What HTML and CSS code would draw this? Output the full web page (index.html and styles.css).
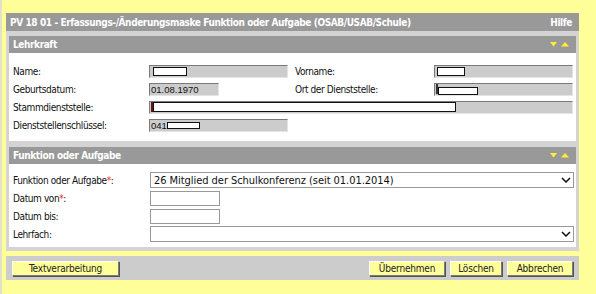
FILE: index.html
```html
<!DOCTYPE html>
<html lang="de">
<head>
<meta charset="utf-8">
<title>PV 18 01</title>
<link rel="stylesheet" href="styles.css">
</head>
<body>
<div class="page">
  <div class="panel">
    <div class="titlebar">
      <span>PV 18 01 - Erfassungs-/Änderungsmaske Funktion oder Aufgabe (OSAB/USAB/Schule)</span>
      <span>Hilfe</span>
    </div>
    <div class="frame">
      <section class="sec">
        <div class="sec-head">
          <span>Lehrkraft</span>
          <svg class="toggles" width="20" height="5" viewBox="0 0 20 5"><polygon points="0,0 7,0 3.5,4.5" /><polygon points="11,4.5 19,4.5 15,0" /></svg>
        </div>
        <div class="sec-body grid-a">
          <div class="lbl">Name:</div>
          <div class="ro w139"><span class="redact r-name"></span></div>
          <div class="lbl">Vorname:</div>
          <div class="ro w139"><span class="redact r-vor"></span></div>

          <div class="lbl">Geburtsdatum:</div>
          <div class="ro w70"><span class="val">01.08.1970</span></div>
          <div class="lbl">Ort der Dienststelle:</div>
          <div class="ro w139"><span class="mark"></span><span class="redact r-ort"></span></div>

          <div class="lbl">Stammdienststelle:</div>
          <div class="ro wfull"><span class="mark red"></span><span class="redact r-stamm"></span></div>

          <div class="lbl">Dienststellenschlüssel:</div>
          <div class="ro w139"><span class="val">041</span><span class="redact r-key"></span></div>
        </div>
      </section>
      <section class="sec">
        <div class="sec-head">
          <span>Funktion oder Aufgabe</span>
          <svg class="toggles" width="20" height="5" viewBox="0 0 20 5"><polygon points="0,0 7,0 3.5,4.5" /><polygon points="11,4.5 19,4.5 15,0" /></svg>
        </div>
        <div class="sec-body grid-b">
          <div class="lbl">Funktion oder Aufgabe<span class="req">*</span>:</div>
          <div class="select"><span>26 Mitglied der Schulkonferenz (seit 01.01.2014)</span><svg width="10" height="6" viewBox="0 0 10 6"><polyline points="1,1 5,5 9,1" /></svg></div>

          <div class="lbl">Datum von<span class="req">*</span>:</div>
          <div class="input"></div>

          <div class="lbl">Datum bis:</div>
          <div class="input"></div>

          <div class="lbl">Lehrfach:</div>
          <div class="select"><span></span><svg width="10" height="6" viewBox="0 0 10 6"><polyline points="1,1 5,5 9,1" /></svg></div>
        </div>
      </section>
    </div>
  </div>
  <div class="buttonbar">
    <button class="btn b-text">Textverarbeitung</button>
    <div class="right">
      <button class="btn b-ueb">Übernehmen</button>
      <button class="btn b-loe">Löschen</button>
      <button class="btn b-abb">Abbrechen</button>
    </div>
  </div>
</div>
</body>
</html>
```
FILE: styles.css
```css
* { box-sizing: border-box; }
html, body { margin: 0; padding: 0; }
body {
  background: #ffff99;
  font-family: "DejaVu Sans Condensed", "DejaVu Sans", sans-serif;
  font-size: 10px;
  color: #111;
  width: 596px;
  height: 294px;
  overflow: hidden;
  border-left: 2px solid #e2e2cc;
}
.page { padding: 13px 0 0 4px; }
.panel { width: 573px; }
.titlebar {
  height: 18px;
  background: #999999;
  color: #fff;
  font-weight: bold;
  letter-spacing: -0.4px;
  display: flex;
  justify-content: space-between;
  align-items: center;
  padding: 0 7px 0 4px;
}
.frame {
  background: #d4d4d4;
  padding: 5px 3px 4px;
  display: flex;
  flex-direction: column;
  gap: 6px;
}
.sec-head {
  height: 17px;
  background: #999999;
  color: #fff;
  font-weight: bold;
  letter-spacing: -0.4px;
  display: flex;
  justify-content: space-between;
  align-items: center;
  padding: 0 6px 0 4px;
}
.toggles polygon { fill: #ffee33; }
.sec-body { background: #fff; }
.grid-a {
  display: grid;
  grid-template-columns: 136px 146px 139px 139px;
  grid-auto-rows: 18px;
  align-items: center;
  padding: 9px 0 7px 4px;
}
.grid-b {
  display: grid;
  grid-template-columns: 137px 1fr;
  grid-auto-rows: 18px;
  align-items: center;
  padding: 7px 0 4px 4px;
}
.lbl { white-space: nowrap; letter-spacing: -0.4px; }
.req { color: #ee2222; }
.ro {
  height: 13px;
  background: #cccccc;
  border-top: 1px solid #7a7a7a;
  border-left: 1px solid #7a7a7a;
  border-right: 1px solid #e4e4e4;
  border-bottom: 1px solid #e4e4e4;
  display: flex;
  align-items: center;
  padding-left: 1px;
}
.w139 { width: 139px; }
.w70 { width: 70px; }
.wfull { width: 424px; grid-column: 2 / 5; }
.val {
  font-family: "Liberation Sans", Arial, sans-serif;
  font-size: 9.5px;
  color: #111;
}
.redact {
  display: inline-block;
  background: #fff;
  border: 1px solid #111;
}
.r-name { width: 34px; height: 9px; margin-left: 2px; }
.r-vor { width: 28px; height: 9px; margin-left: 1px; }
.r-ort { width: 40px; height: 8px; margin-top: 4px; }
.r-stamm { width: 303px; height: 10px; }
.r-key { width: 33px; height: 7px; }
.mark { display: inline-block; width: 2px; height: 10px; background: #333; }
.mark.red { background: #6b1010; }
.select {
  width: 424px;
  height: 16px;
  border: 1px solid #999;
  background: #fff;
  display: flex;
  align-items: center;
  justify-content: space-between;
  padding: 0 2px 0 3px;
  font-size: 11px;
  letter-spacing: -0.05px;
}
.select svg polyline { fill: none; stroke: #111; stroke-width: 1.5; }
.input {
  width: 70px;
  height: 15px;
  border: 1px solid #999;
  background: #fff;
}
.buttonbar {
  margin-top: 5px;
  width: 573px;
  height: 24px;
  background: #cccccc;
  display: flex;
  align-items: center;
  padding: 0 6px;
}
.right { margin-left: auto; display: flex; gap: 5px; }
.btn {
  height: 15px;
  padding: 0;
  background: #ffff99;
  border: 1px solid;
  border-color: #ffffff #7a7a7a #7a7a7a #ffffff;
  box-shadow: 1px 1px 0 #555;
  font-family: "DejaVu Sans Condensed", "DejaVu Sans", sans-serif;
  font-size: 10px;
  letter-spacing: -0.2px;
  color: #222;
  line-height: 13px;
}
.b-text { width: 107px; }
.b-ueb { width: 76px; }
.b-loe { width: 52px; }
.b-abb { width: 66px; }
```
